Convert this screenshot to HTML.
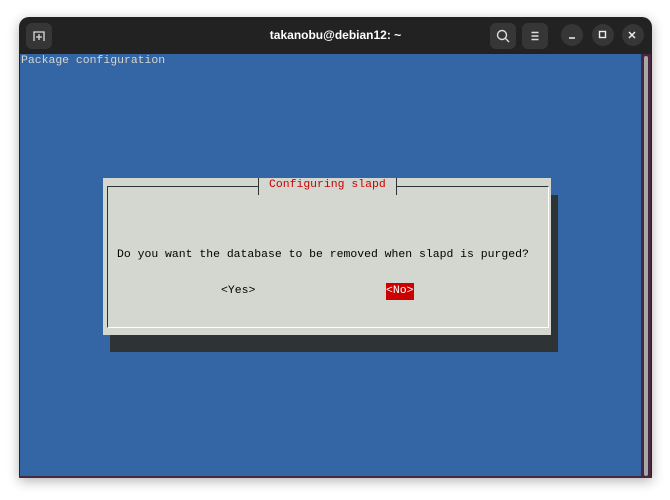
<!DOCTYPE html>
<html><head><style>
*{margin:0;padding:0;box-sizing:border-box}
body{width:670px;height:500px;background:#fff;position:relative;overflow:hidden;font-family:"Liberation Mono",monospace}
.win{position:absolute;left:19px;top:17px;width:633px;height:461px;background:#222;border-radius:10px 10px 0 0;box-shadow:0 3px 12px rgba(0,0,0,.3);overflow:hidden}
.title{position:absolute;left:0;top:0;width:633px;height:37px;color:#fff;font:bold 12px "Liberation Sans",sans-serif;text-align:center;line-height:37px}
.term{position:absolute;left:20px;top:54px;width:621px;height:422px;background:#3465a4}
.strip{position:absolute;left:641px;top:54px;width:10px;height:424px;background:#48283f}
.sb{position:absolute;left:644px;top:56px;width:4px;height:420px;background:#a8a8a8;border-radius:2px}
.bottom{position:absolute;left:19px;top:476px;width:633px;height:2px;background:#48283f}
.t{position:absolute;font-size:11.45px;line-height:14px;white-space:pre}
.btn{position:absolute;top:23px;width:26px;height:26px;background:#363636;border-radius:6px}
.c{position:absolute;top:24px;width:22px;height:22px;border-radius:50%;background:#363636}
</style></head><body>
<div class="win"><div class="title">takanobu@debian12: ~</div></div>
<div class="btn" style="left:26px"></div>
<svg style="position:absolute;left:31px;top:28px" width="16" height="16"><path d="M3 13V4h10v9" fill="none" stroke="#ddd" stroke-width="1.3"/><path d="M8 6v6M5 9h6" stroke="#ddd" stroke-width="1.3"/></svg>
<div class="btn" style="left:490px"></div>
<svg style="position:absolute;left:495px;top:28px" width="16" height="16"><circle cx="7" cy="7" r="4.5" fill="none" stroke="#ddd" stroke-width="1.4"/><path d="M10.3 10.3L14 14" stroke="#ddd" stroke-width="1.4"/></svg>
<div class="btn" style="left:522px"></div>
<svg style="position:absolute;left:527px;top:28px" width="16" height="16"><path d="M4.5 4.5h7M4.5 8h7M4.5 11.5h7" stroke="#ddd" stroke-width="1.4"/></svg>
<div class="c" style="left:561px"></div><div class="c" style="left:592px"></div><div class="c" style="left:622px"></div>
<svg style="position:absolute;left:561px;top:24px" width="90" height="22"><path d="M8 14h6" stroke="#eee" stroke-width="1.5"/><rect x="38.5" y="7.5" width="6" height="6" fill="none" stroke="#eee" stroke-width="1.4"/><path d="M68 8l6 6M74 8l-6 6" stroke="#eee" stroke-width="1.5"/></svg>
<div class="term"></div>
<div class="strip"></div><div class="sb"></div><div class="bottom"></div>
<div class="t" style="left:21px;top:54px;color:#d3d7cf">Package configuration</div>
<div style="position:absolute;left:110px;top:195px;width:448px;height:157px;background:#2e3436"></div>
<div style="position:absolute;left:103px;top:178px;width:448px;height:157px;background:#d3d7cf"></div>
<div style="position:absolute;left:107px;top:186px;width:442px;height:142px;border:1px solid #2e3436;border-right-color:#fff;border-bottom-color:#fff"></div>
<div style="position:absolute;left:258px;top:178px;width:139px;height:17px;background:#d3d7cf;border-left:1px solid #2e3436;border-right:1px solid #2e3436"></div>
<div class="t" style="left:269px;top:178px;color:#cc0000">Configuring slapd</div>
<div class="t" style="left:117px;top:248px;color:#000">Do you want the database to be removed when slapd is purged?</div>
<div class="t" style="left:221px;top:284px;color:#000">&lt;Yes&gt;</div>
<div style="position:absolute;left:386px;top:283px;width:28px;height:17px;background:#cc0000"></div>
<div class="t" style="left:386px;top:284px;color:#fff">&lt;No&gt;</div>
</body></html>
